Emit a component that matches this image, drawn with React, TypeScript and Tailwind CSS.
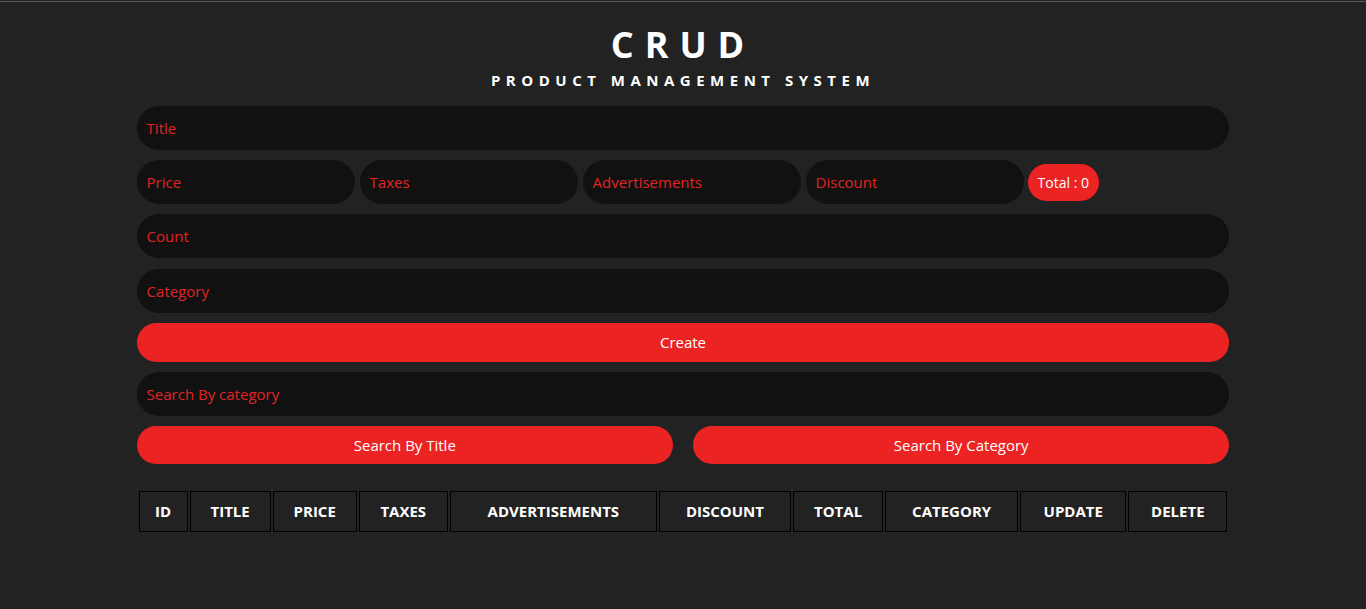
const inputCls =
  "h-[44px] w-full rounded-[22px] bg-[#111111] px-[10px] text-[15px] text-white outline-none placeholder:text-[#e02424]";

const columns = [
  { label: "ID", w: "w-[49px]" },
  { label: "TITLE", w: "w-[81px]" },
  { label: "PRICE", w: "w-[84px]" },
  { label: "TAXES", w: "w-[89px]" },
  { label: "ADVERTISEMENTS", w: "w-[207px]" },
  { label: "DISCOUNT", w: "w-[132px]" },
  { label: "TOTAL", w: "w-[90px]" },
  { label: "CATEGORY", w: "w-[133px]" },
  { label: "UPDATE", w: "w-[106px]" },
  { label: "DELETE", w: "w-[99px]" },
];

export default function App() {
  return (
    <div className="min-h-screen bg-[#222222] font-['Open_Sans',sans-serif]">
      <div className="h-px" />
      <div className="h-px bg-[#5c5c5c]" />

      <div className="mx-auto w-[80%]">
        <div className="pt-[22px] text-center text-white">
          <h1 className="text-[36px] font-bold leading-[42px] tracking-[11px]">CRUD</h1>
          <p className="mt-[4px] text-[15px] font-bold leading-[20px] tracking-[5.5px]">
            PRODUCT MANAGEMENT SYSTEM
          </p>
        </div>

        <div className="mt-[16px] flex flex-col gap-[10px]">
          <input className={inputCls} placeholder="Title" />

          <div className="flex items-center gap-[5px]">
            <input className={inputCls + " !w-[218px]"} placeholder="Price" />
            <input className={inputCls + " !w-[218px]"} placeholder="Taxes" />
            <input className={inputCls + " !w-[218px]"} placeholder="Advertisements" />
            <input className={inputCls + " !w-[218px]"} placeholder="Discount" />
            <div className="-ml-px flex h-[37px] items-center rounded-[19px] bg-[#ec2323] px-[10px] text-[14px] text-white">
              Total : 0
            </div>
          </div>

          <input className={inputCls} placeholder="Count" />
          <input className={inputCls + " mt-px"} placeholder="Category" />

          <button className="h-[39px] w-full rounded-[20px] bg-[#ec2323] text-[15px] text-white">
            Create
          </button>

          <input className={inputCls} placeholder="Search By category" />

          <div className="flex gap-[20px]">
            <button className="h-[38px] flex-1 rounded-[19px] bg-[#ec2323] text-[15px] text-white">
              Search By Title
            </button>
            <button className="h-[38px] flex-1 rounded-[19px] bg-[#ec2323] text-[15px] text-white">
              Search By Category
            </button>
          </div>
        </div>

        <table className="mt-[25px] w-full table-fixed border-separate border-spacing-[2px]">
          <thead>
            <tr>
              {columns.map((c) => (
                <th
                  key={c.label}
                  className={`${c.w} h-[41px] border border-black p-0 text-center text-[15px] font-bold text-white`}
                >
                  {c.label}
                </th>
              ))}
            </tr>
          </thead>
        </table>
      </div>
    </div>
  );
}
